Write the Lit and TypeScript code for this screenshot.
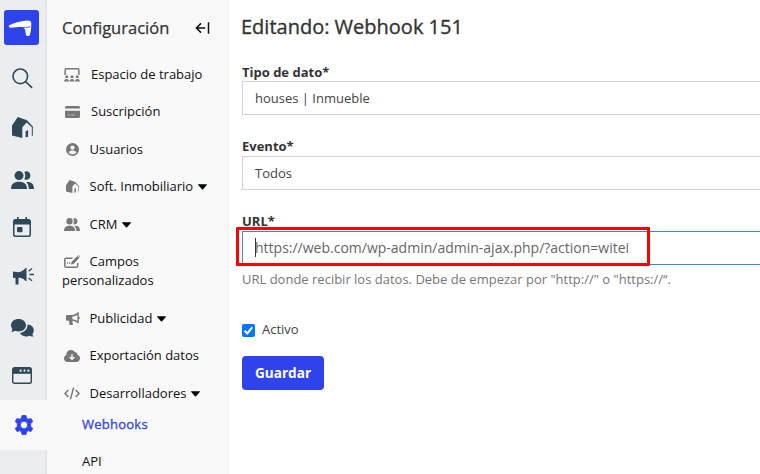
import { LitElement, html, svg, css, nothing } from "lit";
import { customElement, property } from "lit/decorators.js";

const people = svg`
  <circle cx="8" cy="4.600" r="4.500"/>
  <path d="M0 18c0-5 3-7.200 8-7.200s8 2.200 8 7.200z"/>
  <path d="M13.300 .9c3-1.600 6.100.4 6.100 3.700s-3.100 5.300-6.100 3.700c1.300-2.300 1.300-5.100 0-7.400z"/>
  <path d="M15 11c5-.7 8 1.700 8 7h-5.200c0-3.200-.8-5.300-2.800-7z"/>`;

const house = svg`
  <path d="M0 8.500L5.800 0 15 3.300 20.800 9.600 20 10.300 14.600 5.600 10.300 10.300V21L0 18.500z"/>
  <path d="M20.300 9.500v9.300" fill="none" stroke="currentColor" stroke-width="1"/>
  <path d="M13.600 14.300l2.500-1.400v6.900l-2.500.7z"/>`;

const glyphs: Record<string, { box: string; art: unknown }> = {
  logo: {
    box: "0 0 35 35",
    art: svg`<path fill="#fff" d="M5.200 15.200C10 12.800 18 10.500 23.500 10.400c2.800 0 3.800 1 3.800 3.200 0 5-.6 9.600-1.700 11.700-.5 1-3 1-3.500 0-.6-1.400-.6-3.500-.9-5.200l-1.400-2.500c-1.500-1.200-9 0-12.900.1-1.800.2-2.900-1.700-1.700-2.500z"/><path d="M19.500 17.300c2.500.2 4.800.1 6.900-.8" fill="none" stroke="#2f43ed" stroke-width=".8"/>`,
  },
  search: {
    box: "0 0 21 21",
    art: svg`<g fill="none" stroke="currentColor" stroke-width="1.600"><circle cx="8.300" cy="8.300" r="7.300"/><path d="M13.600 13.600l6.500 6.200"/></g>`,
  },
  house: { box: "0 0 21 21", art: house },
  people: { box: "0 0 23 18", art: people },
  calendar: {
    box: "0 0 18 20",
    art: svg`<path fill-rule="evenodd" d="M4 0h1.600v2h6.800V0H14v2h1.500A2.500 2.500 0 0 1 18 4.500v13a2.500 2.500 0 0 1-2.500 2.500h-13A2.500 2.500 0 0 1 0 17.500v-13A2.500 2.500 0 0 1 2.500 2H4zM1.500 7.500V17c0 1 .5 1.500 1.500 1.500h12c1 0 1.500-.5 1.500-1.500V7.500z"/><rect x="4" y="10" width="5.500" height="5.200" rx="1"/>`,
  },
  horn: {
    box: "0 0 21 18",
    art: svg`<path d="M0 4.500L5 5.200C8.500 4.800 11 3 12.500 1h1v13h-1c-1.800-2-4-3-7-3.400V17.500H2.500V10.800L0 11z"/><path d="M15.500 4.200L19 1.600M16.500 7.500H21M15.500 11l3.500 2.800" stroke="currentColor" stroke-width="1.300" fill="none"/>`,
  },
  chat: {
    box: "0 0 23 18",
    art: svg`<path d="M7.500 0c4.200 0 7.500 2.700 7.500 6.200s-3.300 6.200-7.500 6.200c-1.200 0-2.300-.2-3.300-.6C3 12.500 1.600 12.800.2 12.700c.8-.8 1.200-1.700 1.200-2.600C.5 9 0 7.700 0 6.200 0 2.700 3.300 0 7.500 0z"/><path d="M16.400 5.600c3.700.3 6.400 2.600 6.400 5.600 0 1.400-.5 2.700-1.400 3.700.1 1.100.5 1.900 1.300 2.700-1.500 0-2.900-.2-4-.8-1 .4-2.100.6-3.200.6-3 0-5.400-1.400-6.500-3.500 4.500-.5 8-3.900 7.400-8.300z"/>`,
  },
  browser: {
    box: "0 0 20 17",
    art: svg`<rect x=".7" y=".7" width="18.600" height="15.600" rx="1.800" fill="none" stroke="currentColor" stroke-width="1.400"/><path d="M1 1h18v5.800H1z"/><g fill="#ebedef"><circle cx="8.600" cy="3.700" r="1.100"/><circle cx="12.500" cy="3.700" r="1.100"/><circle cx="16.400" cy="3.700" r="1.100"/></g>`,
  },
  gear: {
    box: "0 0 20 20",
    art: svg`<path stroke="currentColor" stroke-width=".8" stroke-linejoin="round" fill-rule="evenodd" d="M8 .5h4l.6 2.800 1.700 1 2.700-.9 1.800 3.200-2.100 1.900v3l2.100 1.900-1.800 3.200-2.700-.9-1.700 1-.6 2.800H8l-.6-2.800-1.700-1-2.700.9-1.800-3.200 2.100-1.900v-3L1.200 6.600 3 3.400l2.700.9 1.700-1zM10 6.300a3.700 3.700 0 1 0 0 7.400 3.700 3.700 0 0 0 0-7.400z"/>`,
  },
  workspace: {
    box: "0 0 16 14",
    art: svg`<path d="M1.200 7V1.800Q1.200.8 2.200.8h11.600q1 0 1 1V7" fill="none" stroke="currentColor" stroke-width="1.500"/><circle cx="2.700" cy="8.800" r="1.500"/><circle cx="8" cy="8.800" r="1.500"/><circle cx="13.300" cy="8.800" r="1.500"/><path d="M0 13.500c0-3.300 5-3.300 5 0zM5.500 13.500c0-3.300 5-3.300 5 0zM11 13.500c0-3.300 5-3.300 5 0z"/>`,
  },
  card: {
    box: "0 0 15 12",
    art: svg`<path d="M0 2.500V1.500Q0 0 1.500 0h12Q15 0 15 1.500v1zM0 4.800h15v5.700q0 1.500-1.500 1.500h-12Q0 12 0 10.500z"/><path d="M2.500 9h2.300M5.800 9h4" stroke="#f9f9f9" stroke-width=".9" opacity=".6"/>`,
  },
  user: {
    box: "0 0 13 13",
    art: svg`<circle cx="6.500" cy="6.500" r="6.500"/><circle cx="6.500" cy="4.700" r="2.100" fill="#f9f9f9"/><path fill="#f9f9f9" d="M2.600 9.300c1.700-2.300 6.100-2.300 7.800 0-1.700 2.700-6.100 2.700-7.800 0z"/>`,
  },
  edit: {
    box: "0 0 16 13",
    art: svg`<path d="M8.500 3.200H2Q.8 3.200.8 4.400v6.400Q.8 12.200 2 12.200h10.500q1.200 0 1.200-1.400V8" fill="none" stroke="currentColor" stroke-width="1.500"/><path d="M7 9.400l.5-2.500L13.300 1l2 2L9.500 8.900zM13.800.5q.6-.6 1.200 0l.8.800q.4.500-.1 1z"/><circle cx="3.500" cy="8" r=".8"/><circle cx="5.700" cy="8" r=".8"/>`,
  },
  bullhorn: {
    box: "0 0 14 13",
    art: svg`<path fill-rule="evenodd" d="M0 4q0-1 1-1h4.500C8 3 10 1.800 11.300.6 12 0 12.800 0 12.800.9v3.600q1 .5 1 1.400 0 1-1 1.400v3.200c0 .9-.8 1-1.500.4C10 9.700 8.300 8.800 6.300 8.700l.6 3.700q0 .6-.6.6H4.200q-.5 0-.6-.5L3 8.700H1Q0 8.700 0 7.700zM6.400 4.500v2.800c2 .1 3.600.7 5 1.700V2.700c-1.400 1.100-3 1.700-5 1.800z"/>`,
  },
  cloud: {
    box: "0 0 16 12",
    art: svg`<path d="M3.600 12C1.500 12 0 10.500 0 8.500 0 6.800 1 5.500 2.400 5.100 2.200 2.200 4.200 0 6.900 0c1.800 0 3.200.9 4 2.300 1.500-.3 2.700.8 2.500 2.500C15 5.200 16 6.600 16 8.300c0 2.100-1.600 3.700-3.600 3.700z"/><path d="M8 4v5M5.600 7L8 9.400 10.400 7" fill="none" stroke="#f9f9f9" stroke-width="1.300"/>`,
  },
  code: {
    box: "0 0 16 13",
    art: svg`<path d="M4.300 3L1 6.500 4.300 10M11.700 3L15 6.500 11.700 10M9.600.6L6.400 12.400" fill="none" stroke="currentColor" stroke-width="1.500"/>`,
  },
  collapse: {
    box: "0 0 15 12",
    art: svg`<path d="M6 1.400L1.400 6 6 10.600M1.500 6h8.800M13.500.2v11.600" fill="none" stroke="currentColor" stroke-width="1.500"/>`,
  },
  caret: { box: "0 0 9 6", art: svg`<path d="M.2.300h8.600q.3.300 0 .6L5 5.200q-.5.500-1 0L.2.900q-.3-.3 0-.6z"/>` },
  check: {
    box: "0 0 13 13",
    art: svg`<path d="M2.600 6.700l2.700 2.700 5.100-6.300" fill="none" stroke="#fff" stroke-width="2"/>`,
  },
};

@customElement("ui-glyph")
class UiGlyph extends LitElement {
  @property() name = "";
  static styles = css`
    :host { display: inline-block; line-height: 0; }
    svg { display: block; width: 100%; height: 100%; fill: currentColor; overflow: visible; }
  `;
  render() {
    const g = glyphs[this.name];
    return g ? html`<svg viewBox=${g.box} preserveAspectRatio="none">${g.art}</svg>` : nothing;
  }
}

@customElement("nav-rail")
class NavRail extends LitElement {
  static styles = css`
    :host { display: flex; flex-direction: column; width: 47px; background: #ebedef; color: #2f4858; box-shadow: inset -2px 0 2px -1px #dcdfe1; }
    .brand { width: 35px; height: 35px; margin: 10px 0 8px 4px; border-radius: 3px; background: #2f43ed; }
    .slot { height: 49.600px; display: flex; align-items: center; justify-content: center; padding-right: 3px; flex: none; }
    .active { background: #f9f9f9; color: #2f43ed; height: 50px; padding-right: 0; }
    .search, .house { width: 21px; height: 21px; }
    .search { margin-top: 1px; }
    .people { width: 23px; height: 18px; margin-top: 6px; }
    .calendar { width: 18px; height: 20px; margin-top: 1px; }
    .horn { width: 21px; height: 18px; margin-left: 2px; }
    .chat { width: 23px; height: 18px; margin-top: 4px; }
    .browser { width: 20px; height: 17px; }
    .gear { width: 20px; height: 20px; margin-top: -1px; }
  `;
  render() {
    const items = ["search", "house", "people", "calendar", "horn", "chat", "browser"];
    return html`
      <ui-glyph class="brand" name="logo"></ui-glyph>
      ${items.map((n) => html`<div class="slot"><ui-glyph class=${n} name=${n}></ui-glyph></div>`)}
      <div class="slot active"><ui-glyph class="gear" name="gear"></ui-glyph></div>
    `;
  }
}

interface Entry { icon: string; label: string; caret?: boolean; }

const entries: Entry[] = [
  { icon: "workspace", label: "Espacio de trabajo" },
  { icon: "card", label: "Suscripción" },
  { icon: "user", label: "Usuarios" },
  { icon: "house", label: "Soft. Inmobiliario", caret: true },
  { icon: "people", label: "CRM", caret: true },
  { icon: "edit", label: "Campos personalizados" },
  { icon: "bullhorn", label: "Publicidad", caret: true },
  { icon: "cloud", label: "Exportación datos" },
  { icon: "code", label: "Desarrolladores", caret: true },
];

@customElement("settings-menu")
class SettingsMenu extends LitElement {
  static styles = css`
    :host { display: block; box-sizing: border-box; width: 182px; padding-left: 15px; background: #f9f9f9; border-right: 1px solid #f0f0f0; overflow: hidden; color: #111; font-size: 13px; line-height: 18.750px; }
    .head { display: flex; align-items: center; justify-content: space-between; height: 55.600px; padding-right: 18px; font-size: 16.500px; color: #333; -webkit-text-stroke: .25px #333; }
    .head span { padding-top: 1px; }
    .collapse { width: 15px; height: 12px; color: #111; }
    .row { padding: 9.375px 0; width: 160px; }
    .icon { margin: 0 9.500px 0 2px; vertical-align: -2px; color: #777; }
    .workspace { width: 16px; height: 14px; margin-right: 11px; vertical-align: -3px; }
    .card { width: 15px; height: 12px; margin-left: 3px; margin-right: 11px; }
    .user { width: 13px; height: 13px; margin-left: 4px; margin-right: 10.500px; }
    .house { width: 13px; height: 13px; margin-left: 4px; margin-right: 10.500px; }
    .people { width: 16px; height: 13px; }
    .edit { width: 16px; height: 13px; }
    .bullhorn { width: 14px; height: 13px; margin-left: 4px; }
    .cloud { width: 16px; height: 12px; }
    .code { width: 16px; height: 13px; }
    .caret { width: 9px; height: 6px; margin-left: 4.500px; vertical-align: 1px; color: #000; }
    .sub { padding: 3px 0 15.750px 20px; }
    .current { color: #2f43ed; -webkit-text-stroke: .3px #2f43ed; letter-spacing: .25px; }
  `;
  render() {
    return html`
      <div class="head"><span>Configuración</span><ui-glyph class="collapse" name="collapse"></ui-glyph></div>
      ${entries.map(
        (e) => html`<div class="row"><ui-glyph class="icon ${e.icon}" name=${e.icon}></ui-glyph><span>${e.label}</span>${e.caret ? html`<ui-glyph class="caret" name="caret"></ui-glyph>` : nothing}</div>`,
      )}
      <div class="sub current">Webhooks</div>
      <div class="sub">API</div>
    `;
  }
}

@customElement("webhook-form")
class WebhookForm extends LitElement {
  static styles = css`
    :host { display: block; flex: none; width: 560px; padding-left: 13px; background: #fff; color: #444; font-size: 13px; }
    h1 { margin: 13px 0 0 -1px; font-size: 20px; line-height: 28px; font-weight: 400; color: #333; -webkit-text-stroke: .35px #333; }
    .field { display: flex; flex-direction: column; margin-top: 22px; }
    label { font-weight: 700; line-height: 18px; color: #333; }
    .control { box-sizing: border-box; height: 34px; border: 1px solid #d0d5dd; padding-left: 12px; line-height: 32px; }
    .second label, .third label { line-height: 19px; }
    .url { position: relative; border-color: #3a8dc0; font-size: 14px; color: #666; }
    .caretbar { position: absolute; left: 12px; top: 6px; width: 1px; height: 19px; background: #333; }
    .marker { position: absolute; left: -7px; top: -5px; width: 408px; height: 33px; border: 3px solid #ff0000; border-radius: 1px; }
    .hint { line-height: 20px; margin-top: 4px; color: #777; }
    .toggle { display: flex; align-items: center; gap: 7px; margin-top: 30px; line-height: 20px; }
    .box { width: 13px; height: 13px; border-radius: 2px; background: #0075ff; margin-top: 2px; }
    button { display: block; margin: 17px 0 0; width: 82px; height: 34px; border: 0; border-radius: 4px; padding: 0 0 1px; background: #2f43ed; color: #fff; font: 700 13.600px "Open Sans", sans-serif; }
  `;
  render() {
    return html`
      <h1>Editando: Webhook 151</h1>
      <div class="field first"><label>Tipo de dato*</label><div class="control">houses | Inmueble</div></div>
      <div class="field second"><label>Evento*</label><div class="control">Todos</div></div>
      <div class="field third"><label>URL*</label>
        <div class="control url"><span>https://web.com/wp-admin/admin-ajax.php/?action=witei</span><i class="caretbar"></i><i class="marker"></i></div>
      </div>
      <div class="hint">URL donde recibir los datos. Debe de empezar por "http://" o "https://“.</div>
      <div class="toggle"><ui-glyph class="box" name="check"></ui-glyph><span>Activo</span></div>
      <button>Guardar</button>
    `;
  }
}

@customElement("app-root")
class AppRoot extends LitElement {
  static styles = css`
    :host { display: flex; width: 760px; height: 474px; overflow: hidden; background: #fff; font-family: "Open Sans", "Noto Sans", sans-serif; }
    nav-rail, settings-menu { flex: none; }
  `;
  render() {
    return html`<nav-rail></nav-rail><settings-menu></settings-menu><webhook-form></webhook-form>`;
  }
}
